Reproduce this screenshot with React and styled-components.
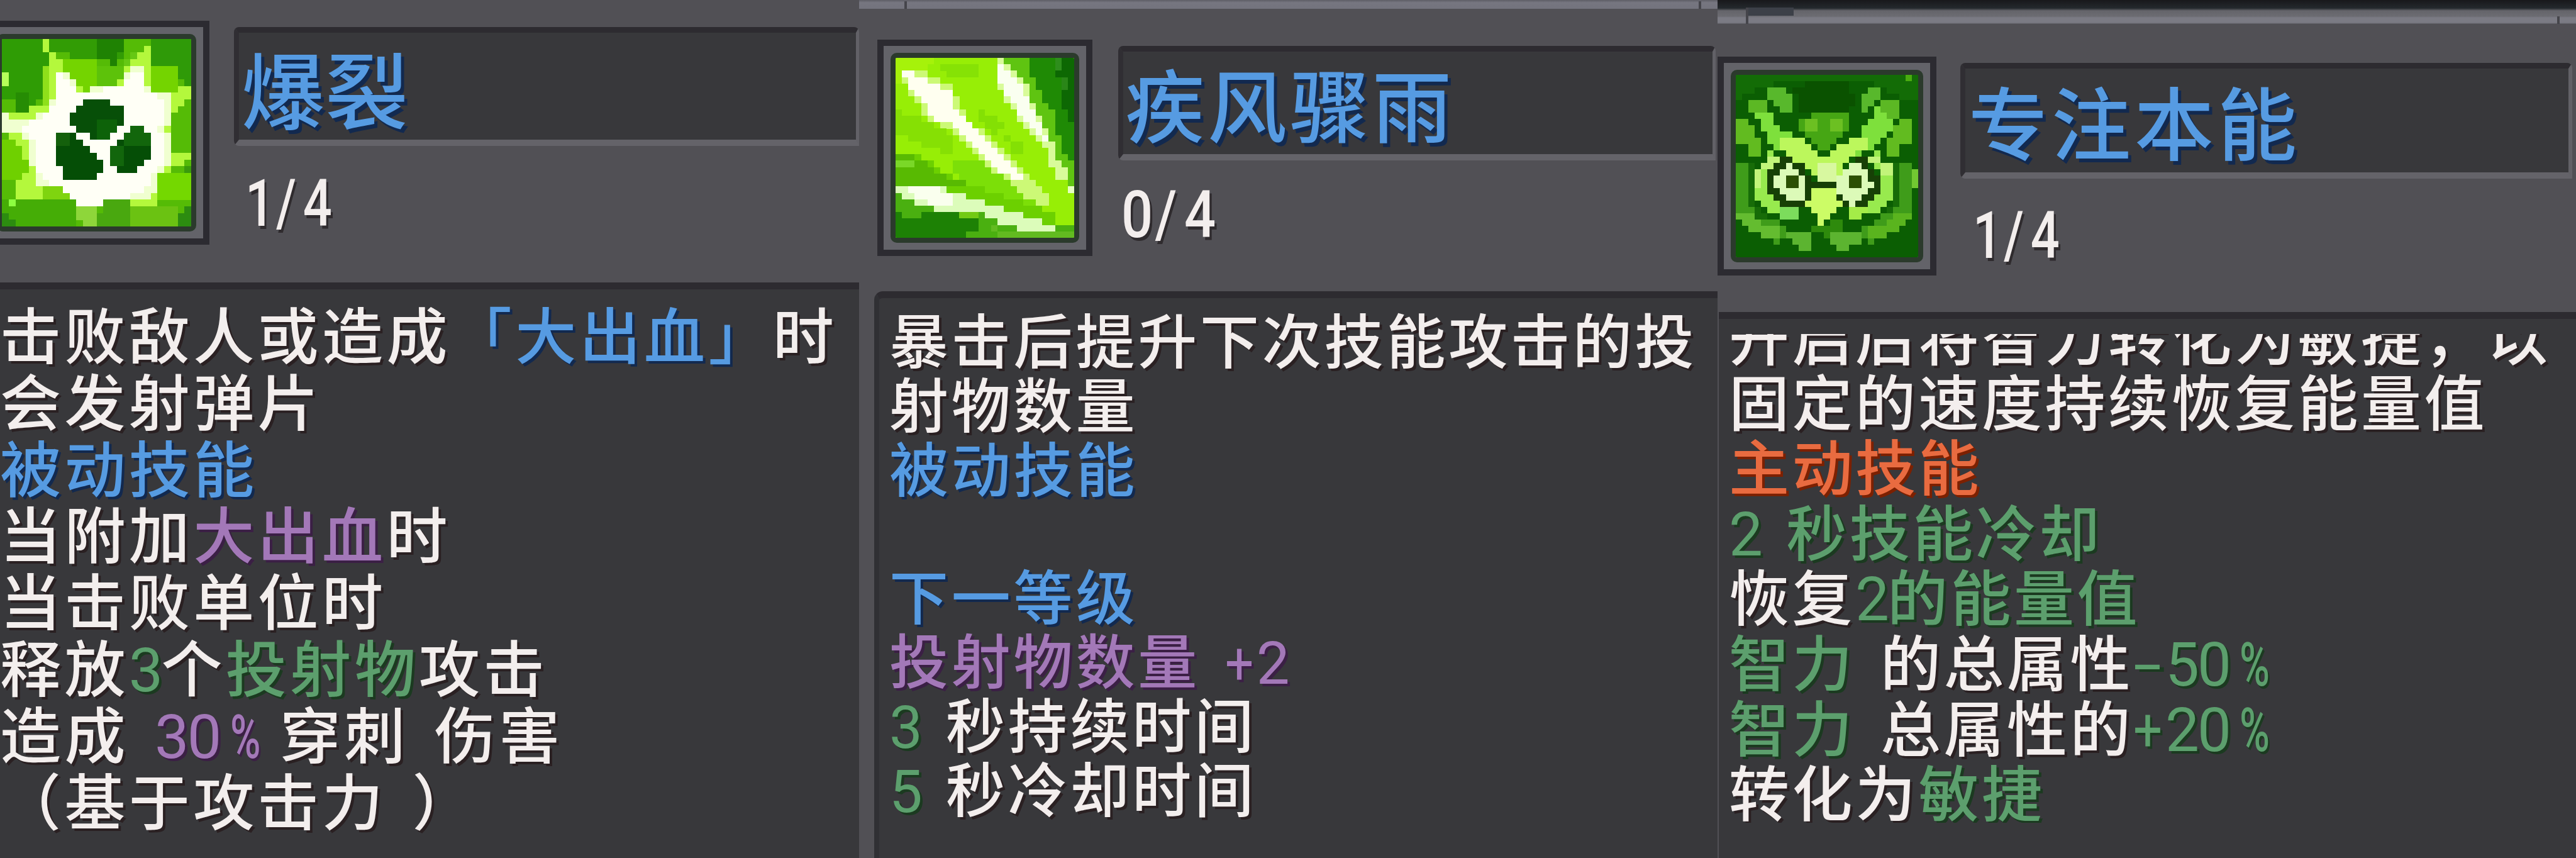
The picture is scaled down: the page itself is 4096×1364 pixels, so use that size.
import styled, { createGlobalStyle } from "styled-components";

const GlobalStyle = createGlobalStyle`
  * {
    margin: 0;
    padding: 0;
    box-sizing: border-box;
  }
  body {
    background: #515055;
    overflow: hidden;
  }
`;

const cores = {
  branco: ["#f3eeed", "#2a2022"],
  azul: ["#569be2", "#12294f"],
  roxo: ["#a378b8", "#3b1f45"],
  verde: ["#5c9f6d", "#1b3a20"],
  laranja: ["#e96b40", "#7d2000"],
};

const Flex = styled.div`
  display: flex;
  width: 4096px;
  height: 1364px;
  font-family: "Noto Sans CJK SC", sans-serif;
`;
const Painel = styled.section`
  display: flex;
  flex-direction: column;
  width: ${(p) => p.$largura}px;
  height: 1364px;
  background: #515055;
  overflow: hidden;
`;
const Borda = styled.div`
  display: flex;
  align-items: flex-end;
  justify-content: space-between;
  flex: none;
  height: ${(p) => p.$altura}px;
  padding: 0 26px 0 ${(p) => p.$recuo}px;
  background: ${(p) => p.$fundo};
`;
const Risco = styled.span`
  width: 4px;
  height: 12px;
  background: #45454b;
`;
const Encaixe = styled.span`
  width: 76px;
  height: 26px;
  border-left: 4px solid #45454b;
  background: linear-gradient(#3c4048 0 13px, transparent 13px);
`;
const Topo = styled.header`
  display: flex;
  align-items: flex-start;
  flex: none;
  height: ${(p) => p.$altura}px;
  padding-top: ${(p) => p.$topo}px;
  padding-left: ${(p) => p.$esquerda}px;
`;
const Moldura = styled.div`
  flex: none;
  width: ${(p) => p.$w}px;
  height: ${(p) => p.$h}px;
  margin-left: ${(p) => p.$puxa || 0}px;
  border: 10px solid #2c2b31;
  background: #636369;
  padding: 11px;

  svg {
    display: block;
    width: 100%;
    height: 100%;
    border: 8px solid #2b3a2c;
    border-radius: 10px;
  }
`;
const Info = styled.div`
  display: flex;
  flex-direction: column;
  width: ${(p) => p.$w}px;
  margin-top: 10px;
  margin-left: ${(p) => p.$espaco}px;
`;
const Titulo = styled.h1`
  height: ${(p) => p.$h}px;
  padding-left: ${(p) => p.$recuo}px;
  border-style: solid;
  border-width: 9px ${(p) => p.$direita}px 10px 8px;
  border-color: #2d2b30 #626167 #646369 #302e33;
  border-radius: 8px 8px 0 8px;
  background: #38383b;
  color: ${cores.azul[0]};
  text-shadow: 5px 6px 0 ${cores.azul[1]};
  font-size: ${(p) => p.$fonte}px;
  font-weight: 500;
  letter-spacing: ${(p) => p.$letra}px;
  line-height: ${(p) => p.$linha}px;
  white-space: nowrap;
`;
const Nivel = styled.p`
  align-self: flex-start;
  margin-top: ${(p) => p.$topo}px;
  margin-left: ${(p) => p.$recuo}px;
  color: #f3eeed;
  font-family: Roboto, sans-serif;
  font-size: 104px;
  font-weight: 500;
  line-height: 100px;
  letter-spacing: -3px;
  text-shadow: 4px 5px 0 #2f2b2e;
  transform: scaleX(${(p) => p.$escala});
  transform-origin: left;

  span {
    margin: 0 17px 0 7px;
  }
`;
const Corpo = styled.main`
  flex: 1;
  margin-left: ${(p) => p.$margem}px;
  padding-top: ${(p) => p.$topo}px;
  padding-left: ${(p) => p.$recuo}px;
  border-top: 11px solid #2d2b30;
  border-left: ${(p) => (p.$lateral ? "8px solid #303034" : "none")};
  border-top-left-radius: ${(p) => (p.$lateral ? 14 : 0)}px;
  background: #38383b;
`;
const Rolagem = styled.div`
  overflow: hidden;
`;
const Texto = styled.div`
  margin-top: ${(p) => p.$rolado || 0}px;
  font-size: ${(p) => p.$fonte}px;
  font-weight: 500;
  letter-spacing: ${(p) => p.$letra}px;
  word-spacing: 14px;
  text-spacing-trim: space-all;
`;
const Linha = styled.p`
  height: ${(p) => p.$h}px;
  line-height: ${(p) => p.$h}px;
  white-space: pre;
`;
const Trecho = styled.span`
  color: ${(p) => cores[p.$cor][0]};
  text-shadow: 4px 4px 0 ${(p) => cores[p.$cor][1]};
`;
const Numero = styled.span`
  font-family: Roboto, sans-serif;
  font-weight: 400;
  letter-spacing: -0.03em;
`;
const Sinal = styled.span`
  display: inline-block;
  width: 0.53em;
  font-family: Roboto, sans-serif;
  font-weight: 400;
  letter-spacing: 0;
  line-height: 1;
  transform: scaleX(${(p) => p.$escala});
  transform-origin: left;
`;
const Porcento = styled.span`
  display: inline-block;
  width: 0.54em;
  margin-left: 0.17em;
  margin-right: -0.15em;
  font-family: Roboto, sans-serif;
  font-weight: 500;
  letter-spacing: 0;
  line-height: 1;
  transform: scaleX(0.68);
  transform-origin: left;
`;

// Pixel art: every cell takes the colour of the last polygon that covers its centre
const dentro = (x, y, pts) => {
  let r = false;
  for (let i = 0, j = pts.length - 1; i < pts.length; j = i++) {
    const [xi, yi] = pts[i];
    const [xj, yj] = pts[j];
    if (yi > y !== yj > y && x < ((xj - xi) * (y - yi)) / (yj - yi) + xi) r = !r;
  }
  return r;
};

const PixelArt = ({ area, n, fundo, camadas }) => {
  const [x0, y0, x1, y1] = area;
  const w = (x1 - x0) / n;
  const h = (y1 - y0) / n;
  const formas = camadas.map(([cor, s]) => [
    cor,
    s.split(" ").map((p) => p.split(",").map(Number)),
  ]);
  const rects = [];
  for (let l = 0; l < n; l++) {
    for (let c = 0; c < n; c++) {
      let cor = null;
      formas.forEach(([f, pts]) => {
        if (dentro(x0 + (c + 0.5) * w, y0 + (l + 0.5) * h, pts)) cor = f;
      });
      if (cor) {
        rects.push(
          <rect key={`${l}-${c}`} x={c} y={l} width="1.02" height="1.02" fill={cor} />
        );
      }
    }
  }
  return (
    <svg viewBox={`0 0 ${n} ${n}`} preserveAspectRatio="none" shapeRendering="crispEdges">
      <rect width={n} height={n} fill={fundo} />
      {rects}
    </svg>
  );
};

const explosao = [
  ["#2f9c05", "15,95 200,95 235,220 205,230 205,370 140,440 80,440 80,390 15,390"],
  ["#268c04", "80,360 145,360 145,445 80,445"],
  ["#329c05", "240,95 600,95 590,190 540,220 530,190 400,190 240,160"],
  ["#1f8203", "470,95 600,95 600,150 555,180 555,225 525,225 525,190 470,190"],
  ["#2f9a08", "720,95 905,95 905,340 870,330 830,240 720,230"],
  ["#74d400", "300,190 460,190 460,300 400,350 360,340 300,250"],
  ["#5dc20a", "460,220 590,220 580,310 460,310"],
  ["#74d400", "720,235 830,235 870,345 770,355 720,355"],
  ["#66c814", "600,190 690,130 690,200 600,260"],
  ["#6fd000", "20,560 150,600 170,740 80,860 80,760 20,760"],
  ["#45ad06", "15,860 360,860 380,990 15,990"],
  ["#49a80f", "490,860 620,860 620,990 460,990"],
  ["#6bc212", "600,890 840,890 840,990 620,990"],
  ["#74d800", "740,740 905,740 905,870 740,870"],
  ["#2c8c10", "840,930 905,890 905,990 840,990"],
  ["#2c8c10", "15,920 50,930 80,990 15,990"],
  ["#3a9a0c", "870,700 905,690 905,740 870,740"],
  ["#8ee01a", "205,230 275,230 275,400 200,430"],
  ["#b4f83c", "205,90 240,90 245,165 300,205 350,310 400,350 430,320 560,310 590,230 690,120 720,120 720,350 800,350 870,325 905,325 905,355 870,410 830,420 810,500 800,560 830,640 905,640 905,670 860,700 800,720 750,740 745,897 620,897 615,860 495,870 490,895 370,895 330,850 300,800 210,800 205,860 80,860 80,770 150,740 150,700 80,570 20,545 15,450 140,450 150,420 210,415 250,380 250,200 205,160"],
  ["#8ed63a", "370,890 465,890 460,990 390,990"],
  ["#7fd40f", "205,800 300,800 330,860 205,860"],
  ["#f0ffd0", "250,240 320,240 370,330 400,350 430,315 570,310 600,250 650,220 690,240 700,350 800,365 810,420 790,540 815,560 800,600 825,650 770,725 740,750 730,840 620,870 600,865 495,865 490,895 370,895 340,850 290,800 190,790 180,740 150,690 135,600 100,560 20,530 20,460 150,475 230,430 265,370"],
  ["#fffff6", "275,265 310,270 350,330 400,350 560,320 600,290 640,250 670,260 680,350 760,370 770,420 760,540 790,560 770,600 790,650 760,720 720,740 700,800 600,850 495,865 490,895 380,895 340,840 290,800 220,770 180,720 170,690 170,600 120,540 100,500 150,490 250,430 285,370"],
  ["#074f08", "400,385 525,385 525,425 588,425 588,510 550,515 525,580 430,580 430,548 370,545 335,500 335,455 365,450 370,420"],
  ["#0d6209", "465,485 560,485 525,580 465,580"],
  ["#054e06", "270,548 365,548 365,580 430,610 460,670 492,680 490,730 460,770 335,770 270,700"],
  ["#14600c", "270,548 340,548 340,605 270,605"],
  ["#054e06", "620,515 680,515 715,550 715,660 680,700 650,738 560,738 525,700 525,620 590,570 590,548"],
  ["#12660c", "620,515 680,515 715,550 715,605 590,605 590,548"],
  ["#12660c", "525,620 588,600 588,700 525,700"],
  ["#b6ff5a", "15,255 50,255 50,325 15,325"],
  ["#8cff40", "45,860 80,860 80,900 45,900"],
];

const flechas = [
  ["#a6f20a", "100,95 280,95 240,180 130,140 100,300"],
  ["#86e205", "280,130 500,130 480,200 400,200"],
  ["#84e004", "510,340 600,380 610,440 560,450 510,400"],
  ["#84e004", "620,460 720,500 700,570 650,540"],
  ["#86e004", "100,340 220,380 370,470 370,560 260,520 100,450"],
  ["#7cdf08", "380,590 560,590 740,740 800,850 560,790 400,720"],
  ["#6cd000", "100,540 220,560 400,680 640,760 850,830 850,890 600,810 400,740 100,710"],
  ["#58ba02", "100,560 200,570 330,650 430,690 400,720 100,710"],
  ["#7ad828", "100,585 190,585 190,615 100,615"],
  ["#1f8a05", "740,95 955,95 955,580 910,560 880,480 850,350 800,300 760,230 740,150"],
  ["#0d6803", "850,95 955,95 955,420 900,330 880,200"],
  ["#2e8e1c", "860,95 890,95 890,160 860,160"],
  ["#2a8618", "890,190 920,190 920,250 890,250"],
  ["#5fc411", "625,95 745,95 760,200 800,290 860,350 880,460 910,550 955,580 955,720 900,650 830,480 770,380 720,240 640,160"],
  ["#4ab010", "100,730 220,790 350,830 500,820 740,920 955,890 955,950 100,950"],
  ["#1d8105", "100,840 200,860 260,830 380,840 500,870 500,920 380,950 100,950"],
  ["#72ca14", "400,820 500,820 500,860 400,860"],
  ["#62bb20", "560,900 760,920 955,920 955,950 620,950"],
  ["#ccf976", "130,150 210,150 380,240 430,370 560,490 700,630 845,770 830,810 790,800 640,690 500,570 370,430 280,410 210,320 150,230"],
  ["#fffff0", "135,165 190,165 370,265 400,360 560,510 700,650 690,690 650,670 520,560 370,400 290,390 240,310 160,220"],
  ["#d8fb9a", "590,110 620,110 720,210 780,370 840,470 870,560 925,640 920,690 890,680 855,630 810,510 730,430 630,310 585,220"],
  ["#fafff0", "600,130 630,150 700,230 750,340 800,440 825,490 790,480 740,410 640,290 600,210"],
  ["#dcfcba", "100,705 310,705 410,740 500,770 600,805 690,835 770,865 865,890 865,930 740,925 650,890 550,855 500,825 430,825 380,835 310,825 220,795 160,770 100,740"],
  ["#faffee", "160,715 300,715 400,760 380,800 320,800 220,770"],
  ["#e6ffc0", "925,705 955,705 955,745 925,745"],
];

const coruja = [
  ["#136c06", "100,120 960,120 960,250 820,200 740,150 640,150 300,150 100,240"],
  ["#0a5200", "380,170 640,150 680,280 560,310 400,290"],
  ["#58b82c", "255,180 320,180 380,250 375,300 330,310 285,270 255,240"],
  ["#58b82c", "785,170 740,170 690,250 690,300 720,290 780,240"],
  ["#62bb20", "100,335 150,335 190,390 225,450 215,530 170,500 130,440 100,440"],
  ["#62bb20", "940,335 890,335 850,390 820,450 820,510 870,500 910,440 940,440"],
  ["#46a614", "390,340 480,305 640,315 650,370 580,440 520,490 460,440 400,370"],
  ["#6cc022", "420,340 480,320 500,380 430,380"],
  ["#6cc022", "550,340 620,330 620,380 560,400"],
  ["#3f9c1a", "100,560 150,530 180,540 180,720 250,800 340,850 320,930 260,920 190,880 100,800"],
  ["#3f9c1a", "945,560 900,550 890,560 860,720 800,800 710,860 720,930 790,920 850,880 945,800"],
  ["#176c08", "150,560 180,540 180,720 250,790 220,820 150,740"],
  ["#176c08", "890,560 860,540 860,720 800,790 820,820 880,740"],
  ["#64bc30", "100,770 160,790 250,850 330,870 310,925 260,915 190,880 100,800"],
  ["#5ab41e", "940,770 880,790 790,850 710,870 730,925 780,915 850,880 940,800"],
  ["#72c832", "930,580 970,580 970,670 930,670"],
  ["#5cb430", "345,870 400,870 475,900 475,960 400,960 350,920"],
  ["#5cb430", "560,890 690,880 685,950 570,965"],
  ["#2e8a0c", "460,840 600,830 620,870 540,900 450,880"],
  ["#98ea4e", "260,490 325,520 290,560 255,580 255,700 330,770 330,805 260,790 195,730 190,570 220,560"],
  ["#98ea4e", "780,490 720,520 760,560 780,580 780,700 710,760 700,800 780,790 840,730 850,570 820,560"],
  ["#c2f47a", "255,520 320,520 270,560 230,580 225,680 200,650 200,580"],
  ["#c2f47a", "720,520 780,510 840,560 840,620 800,620 790,570"],
  ["#174006", "340,510 400,540 450,600 470,640 590,640 600,600 650,540 700,510 760,580 790,640 770,700 720,750 600,770 590,700 560,670 480,670 440,740 400,770 330,770 260,700 255,600"],
  ["#7ee03c", "165,240 250,245 280,330 330,390 430,430 520,520 610,450 700,400 760,310 800,245 885,240 870,320 820,420 700,500 620,550 590,600 520,640 460,600 420,560 330,500 240,430 220,340 170,310"],
  ["#5cb824", "165,240 250,245 250,290 220,310 170,310"],
  ["#5cb824", "800,245 885,240 870,320 830,330 800,300"],
  ["#bcf75c", "300,420 430,430 520,525 610,450 720,410 740,460 690,495 620,550 590,600 520,640 460,600 420,560 330,500 300,470"],
  ["#d8f8a0", "490,540 590,540 590,600 550,640 500,630"],
  ["#dcfab8", "345,550 375,550 440,620 440,690 410,740 360,740 330,700 275,650 300,600"],
  ["#dcfab8", "690,550 660,550 595,620 595,690 640,745 670,740 720,700 760,650 730,600"],
  ["#2c5004", "350,615 410,615 410,670 350,670"],
  ["#2c5004", "630,615 690,615 690,670 630,670"],
  ["#ccfc66", "480,670 565,670 600,720 600,760 560,780 530,840 500,840 480,790 440,760 440,720"],
  ["#7cdc5c", "310,765 415,765 415,830 330,830"],
  ["#a4ec48", "630,770 720,770 705,830 640,830"],
  ["#4aac10", "910,120 955,120 955,150 910,150"],
];

const Linhas = ({ linhas, altura }) =>
  linhas.map((linha, i) => (
    <Linha key={i} $h={altura}>
      {linha.map(([cor, texto], k) => (
        <Trecho key={k} $cor={cor}>
          {texto.split(/([0-9]+|[+%-])/).map((t, j) => {
            if (t === "%") return <Porcento key={j}>{t}</Porcento>;
            if (t === "-") return <Sinal key={j} $escala={1.7}>{t}</Sinal>;
            if (t === "+") return <Sinal key={j} $escala={0.85}>{t}</Sinal>;
            if (/[0-9]/.test(t)) return <Numero key={j}>{t}</Numero>;
            return t;
          })}
        </Trecho>
      ))}
    </Linha>
  ));

const linhasExplosao = [
  [["branco", "击败敌人或造成"], ["azul", "「大出血」"], ["branco", "时"]],
  [["branco", "会发射弹片"]],
  [["azul", "被动技能"]],
  [["branco", "当附加"], ["roxo", "大出血"], ["branco", "时"]],
  [["branco", "当击败单位时"]],
  [["branco", "释放"], ["verde", "3"], ["branco", "个"], ["verde", "投射物"], ["branco", "攻击"]],
  [["branco", "造成 "], ["roxo", "30%"], ["branco", " 穿刺 伤害"]],
  [["branco", "（基于攻击力 ）"]],
];
const linhasFlechas = [
  [["branco", "暴击后提升下次技能攻击的投"]],
  [["branco", "射物数量"]],
  [["azul", "被动技能"]],
  [],
  [["azul", "下一等级"]],
  [["roxo", "投射物数量 +2"]],
  [["verde", "3"], ["branco", " 秒持续时间"]],
  [["verde", "5"], ["branco", " 秒冷却时间"]],
];
const linhasCoruja = [
  [["branco", "开启后将智力转化为敏捷，以"]],
  [["branco", "固定的速度持续恢复能量值"]],
  [["laranja", "主动技能"]],
  [["verde", "2 秒技能冷却"]],
  [["branco", "恢复"], ["verde", "2的能量值"]],
  [["verde", "智力"], ["branco", " 的总属性"], ["verde", "-50%"]],
  [["verde", "智力"], ["branco", " 总属性的"], ["verde", "+20%"]],
  [["branco", "转化为"], ["verde", "敏捷"]],
];

const App = () => {
  return (
    <>
      <GlobalStyle />
      <Flex>
        <Painel $largura={1366}>
          <Topo $altura={449} $topo={33} $esquerda={0}>
            <Moldura $w={359} $h={356} $puxa={-26}>
              <PixelArt area={[15, 95, 905, 990]} n={28} fundo="#55bb06" camadas={explosao} />
            </Moldura>
            <Info $w={994} $espaco={39}>
              <Titulo $h={189} $recuo={4} $direita={5} $fonte={132} $letra={1} $linha={172}>
                爆裂
              </Titulo>
              <Nivel $topo={42} $recuo={18} $escala={0.78}>
                1<span>/</span>4
              </Nivel>
            </Info>
          </Topo>
          <Corpo $margem={0} $topo={15} $recuo={0}>
            <Texto $fonte={97} $letra={5.4}>
              <Linhas linhas={linhasExplosao} altura={105.8} />
            </Texto>
          </Corpo>
        </Painel>

        <Painel $largura={1365}>
          <Borda $altura={14} $recuo={72} $fundo="linear-gradient(#5d5d65, #767680 4px, #73737d)">
            <Risco />
            <Risco />
          </Borda>
          <Topo $altura={449} $topo={49} $esquerda={29}>
            <Moldura $w={342} $h={344}>
              <PixelArt area={[100, 95, 955, 950]} n={28} fundo="#97ee06" camadas={flechas} />
            </Moldura>
            <Info $w={950} $espaco={41}>
              <Titulo $h={182} $recuo={3} $direita={5} $fonte={126} $letra={5} $linha={160}>
                疾风骤雨
              </Titulo>
              <Nivel $topo={37} $recuo={5} $escala={0.85}>
                0<span>/</span>4
              </Nivel>
            </Info>
          </Topo>
          <Corpo $margem={24} $topo={13} $recuo={16} $lateral>
            <Texto $fonte={94} $letra={4.8}>
              <Linhas linhas={linhasFlechas} altura={101.8} />
            </Texto>
          </Corpo>
        </Painel>

        <Painel $largura={1365}>
          <Borda
            $altura={38}
            $recuo={45}
            $fundo="linear-gradient(#18181b 0, #24292d 13px, #64646a 17px, #6c6c72 26px, #7b7b84 28px, #7b7b84 36px, #5a5a60)"
          >
            <Encaixe />
            <Risco />
          </Borda>
          <Topo $altura={458} $topo={52} $esquerda={0}>
            <Moldura $w={348} $h={348}>
              <PixelArt area={[100, 120, 970, 1000]} n={29} fundo="#0b5e03" camadas={coruja} />
            </Moldura>
            <Info $w={973} $espaco={38}>
              <Titulo $h={184} $recuo={5} $direita={6} $fonte={126} $letra={6} $linha={162}>
                专注本能
              </Titulo>
              <Nivel $topo={41} $recuo={20} $escala={0.78}>
                1<span>/</span>4
              </Nivel>
            </Info>
          </Topo>
          <Corpo $margem={2} $topo={24} $recuo={16}>
            <Rolagem>
              <Texto $fonte={96} $letra={4.5} $rolado={-52}>
                <Linhas linhas={linhasCoruja} altura={103.6} />
              </Texto>
            </Rolagem>
          </Corpo>
        </Painel>
      </Flex>
    </>
  );
};

export default App;
